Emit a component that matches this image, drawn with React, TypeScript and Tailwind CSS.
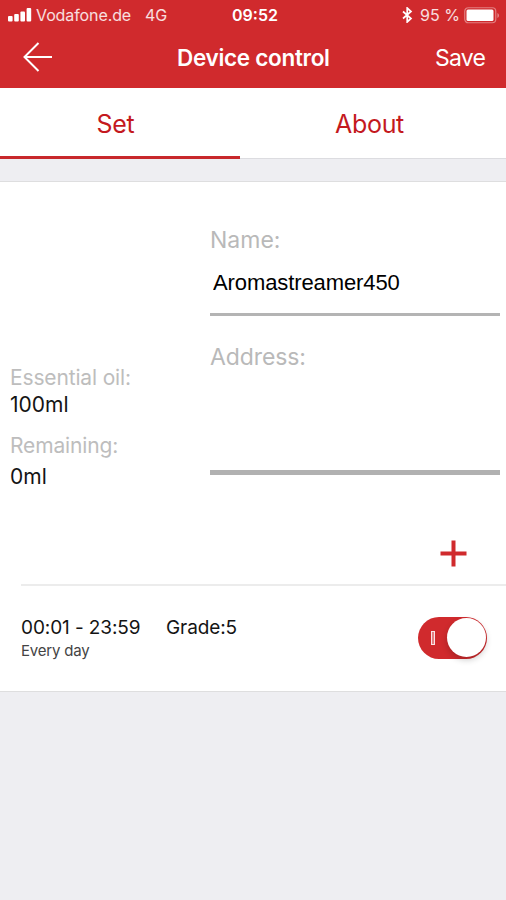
import { useState } from "react";

type Schedule = {
  time: string;
  grade: number;
  repeat: string;
};

const schedules: Schedule[] = [
  { time: "00:01 - 23:59", grade: 5, repeat: "Every day" },
];

const StatusBar = () => (
  <div className="flex h-[30px] items-center text-[16px] leading-[30px]">
    <div className="flex w-[231px] items-center pl-2">
      <svg width="24" height="14" viewBox="0 0 24 14" fill="currentColor">
        <rect x="0" y="8" width="4.6" height="5.5" rx="1" />
        <rect x="6.2" y="6" width="4.6" height="7.5" rx="1" />
        <rect x="12.4" y="3.5" width="4.6" height="10" rx="1" />
        <rect x="18.6" y="0" width="4.6" height="13.5" rx="1" />
      </svg>
      <span className="ml-1 w-[109px] tracking-[-0.1px] text-white/85">Vodafone.de</span>
      <span className="text-white/85">4G</span>
    </div>
    <span className="w-[171px] pl-px font-semibold">09:52</span>
    <svg width="11" height="16" viewBox="0 0 11 16" fill="none" stroke="currentColor" strokeWidth="1.7">
      <path d="M1 4.5 9 11.5 5.2 15V1L9 4.5 1 11.5" />
    </svg>
    <span className="ml-[7px] w-[44px] whitespace-nowrap text-white/85">95 %</span>
    <svg width="36" height="17" viewBox="0 0 36 17">
      <rect x="0.75" y="0.75" width="31" height="15" rx="3.5" fill="none" stroke="white" strokeOpacity="0.4" strokeWidth="1.2" />
      <rect x="2.5" y="2.5" width="27" height="11.5" rx="1.5" fill="white" />
      <path d="M33.5 6v5c1.8-.7 1.8-4.3 0-5Z" fill="white" fillOpacity="0.5" />
    </svg>
  </div>
);

const Toggle = () => {
  const [on, setOn] = useState<boolean>(true);

  return (
    <button
      onClick={() => setOn(!on)}
      className={
        on
          ? "mb-0.5 flex h-[42px] w-[69px] items-center justify-end rounded-full bg-[#d02a2d] pr-px"
          : "mb-0.5 flex h-[42px] w-[69px] flex-row-reverse items-center justify-end rounded-full bg-gray-300 pl-px"
      }
    >
      <span className="mr-[12px] h-[14px] w-[4px] border border-white/80 bg-white/40" />
      <span className="h-[39px] w-[39px] rounded-full bg-white shadow-[0_3px_6px_rgba(0,0,0,0.2)]" />
    </button>
  );
};

export default function App() {
  const [name, setName] = useState<string>("Aromastreamer450");

  return (
    <div className="flex h-[900px] w-[506px] flex-col overflow-hidden bg-[#eeeef2] font-['Inter','Liberation_Sans',sans-serif] text-[#141414]">
      {/* Header */}
      <header className="h-[88px] bg-[#d02a2d] text-white">
        <StatusBar />
        <div className="flex h-[55px] items-center">
          <button className="w-[177px] pb-0.5 pl-[23px]">
            <svg width="29" height="30" viewBox="0 0 29 30" fill="none" stroke="currentColor" strokeWidth="2">
              <path d="M15.5 1 1.5 15l14 14M1.5 15H29" />
            </svg>
          </button>
          <h1 className="w-[258px] text-[22.5px] font-semibold tracking-[-0.3px]">Device control</h1>
          <button className="pt-px text-[23px] tracking-[-0.8px]">Save</button>
        </div>
      </header>

      {/* Tabs */}
      <nav className="flex h-[71px] text-[25px] tracking-[-0.3px] text-[#c4191e]">
        <button className="w-[240px] border-b-[3px] border-[#c8282b] bg-white pt-[5px] pr-[9px]">Set</button>
        <button className="flex-1 border-b border-[#dcdce0] bg-white pt-[3px] pr-[7px]">About</button>
      </nav>

      <main className="mt-[22px] h-[511px] border-y border-[#dededf] bg-white">
        {/* Device info */}
        <section className="flex h-[331px] pr-1.5 pl-2.5">
          <div className="flex w-[200px] shrink-0 flex-col pt-[182px] text-[21px] leading-[27px]">
            <span className="tracking-[-0.15px] text-[#bdbdbd]">Essential oil:</span>
            <span>100ml</span>
            <span className="mt-[14px] tracking-[-0.15px] text-[#bdbdbd]">Remaining:</span>
            <span className="mt-1">0ml</span>
          </div>
          <div className="flex min-w-0 flex-1 flex-col pt-[42px]">
            <label className="text-[23px] leading-[32px] text-[#b9b9b9]">Name:</label>
            <input
              value={name}
              onChange={(e) => setName(e.target.value)}
              className="h-[60px] border-b-[3px] border-[#b4b4b4] pb-[4px] pl-[3px] font-['Liberation_Sans',sans-serif] text-[22px] tracking-[-0.1px] text-black outline-none"
            />
            <label className="mt-[25px] text-[23px] leading-[32px] tracking-[-0.1px] text-[#b9b9b9]">Address:</label>
            <div className="h-[102px] border-b-[5px] border-[#b1b1b1]" />
          </div>
        </section>

        {/* Add schedule */}
        <div className="ml-[21px] flex h-[73px] justify-end border-b-2 border-[#ececec] pt-[27px] pr-[39px]">
          <svg width="27" height="27" viewBox="0 0 27 27" stroke="#d02a2d" strokeWidth="4">
            <path d="M13.5 0.5v26M0.5 13.5h26" />
          </svg>
        </div>

        {schedules.map((item) => (
          <div key={item.time} className="flex h-[105px] items-center pr-[19px] pl-[21px]">
            <div className="flex flex-1 flex-col">
              <div className="flex text-[19px] leading-[25px] tracking-[-0.1px]">
                <span className="w-[145px]">{item.time}</span>
                <span>Grade:{item.grade}</span>
              </div>
              <span className="text-[15px] leading-[22px] tracking-[-0.2px] text-[#444]">{item.repeat}</span>
            </div>
            <Toggle />
          </div>
        ))}
      </main>
    </div>
  );
}
